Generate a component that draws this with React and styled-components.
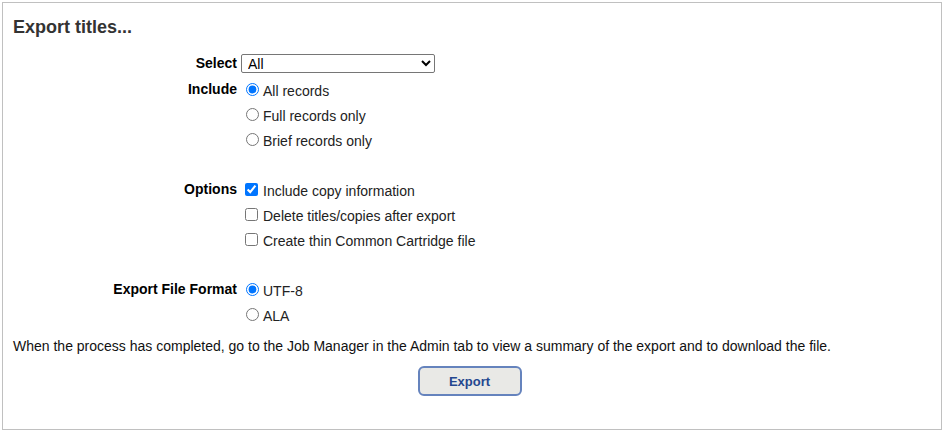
import { useState } from "react";
import styled, { createGlobalStyle } from "styled-components";

const GlobalStyle = createGlobalStyle`
  html, body {
    margin: 0;
    padding: 0;
    background: #fff;
  }
  body {
    font-family: "Liberation Sans", Arial, sans-serif;
    color: #222;
  }
`;

function App() {
  const [scope, setScope] = useState("All");
  const [include, setInclude] = useState("all");
  const [copyInfo, setCopyInfo] = useState(true);
  const [deleteAfter, setDeleteAfter] = useState(false);
  const [thinCartridge, setThinCartridge] = useState(false);
  const [format, setFormat] = useState("utf8");

  return (
    <>
      <GlobalStyle />
      <Panel>
        <Title>Export titles...</Title>
        <Form>
          <Label $single>Select</Label>
          <Field>
            <Dropdown value={scope} onChange={(e) => setScope(e.target.value)}>
              <option>All</option>
              <option>Selected</option>
            </Dropdown>
          </Field>

          <Label>Include</Label>
          <Field>
            <Choice>
              <Radio
                type="radio"
                checked={include === "all"}
                onChange={() => setInclude("all")}
              />
              All records
            </Choice>
            <Choice>
              <Radio
                type="radio"
                checked={include === "full"}
                onChange={() => setInclude("full")}
              />
              Full records only
            </Choice>
            <Choice>
              <Radio
                type="radio"
                checked={include === "brief"}
                onChange={() => setInclude("brief")}
              />
              Brief records only
            </Choice>
          </Field>

          <Spacer />

          <Label>Options</Label>
          <Field>
            <Choice>
              <Check
                type="checkbox"
                checked={copyInfo}
                onChange={() => setCopyInfo(!copyInfo)}
              />
              Include copy information
            </Choice>
            <Choice>
              <Check
                type="checkbox"
                checked={deleteAfter}
                onChange={() => setDeleteAfter(!deleteAfter)}
              />
              Delete titles/copies after export
            </Choice>
            <Choice>
              <Check
                type="checkbox"
                checked={thinCartridge}
                onChange={() => setThinCartridge(!thinCartridge)}
              />
              Create thin Common Cartridge file
            </Choice>
          </Field>

          <Spacer />

          <Label>Export File Format</Label>
          <Field>
            <Choice>
              <Radio
                type="radio"
                checked={format === "utf8"}
                onChange={() => setFormat("utf8")}
              />
              UTF-8
            </Choice>
            <Choice>
              <Radio
                type="radio"
                checked={format === "ala"}
                onChange={() => setFormat("ala")}
              />
              ALA
            </Choice>
          </Field>
        </Form>
        <Note>
          When the process has completed, go to the Job Manager in the Admin
          tab to view a summary of the export and to download the file.
        </Note>
        <Actions>
          <ExportButton type="button">Export</ExportButton>
        </Actions>
      </Panel>
    </>
  );
}

export default App;

const Panel = styled.div`
  margin: 2px 3px 0 2px;
  border: 1px solid #c0c0c0;
  padding: 14px 10px 33px 10px;
`;

const Title = styled.h2`
  margin: 0;
  font-size: 18px;
  line-height: 20px;
  font-weight: bold;
  color: #333;
`;

const Form = styled.div`
  display: grid;
  grid-template-columns: 224px auto;
  column-gap: 4px;
  margin-top: 17px;
`;

const Label = styled.div`
  text-align: right;
  font-size: 14px;
  font-weight: bold;
  color: #000;
  line-height: ${(p) => (p.$single ? "19px" : "22px")};
  padding-top: ${(p) => (p.$single ? "0" : "1px")};
`;

const Field = styled.div`
  display: flex;
  flex-direction: column;
  align-items: flex-start;
`;

const Dropdown = styled.select`
  width: 194px;
  height: 19px;
  font-family: "Liberation Sans", Arial, sans-serif;
  font-size: 14px;
  color: #000;
  padding: 0 0 0 2px;
  border: 1px solid #767676;
  border-radius: 2px;
  background: #fff;
  margin-bottom: 4px;
`;

const Choice = styled.label`
  display: flex;
  align-items: center;
  height: 25px;
  font-size: 14px;
  color: #222;
  padding-top: 2px;
  box-sizing: border-box;
`;

const Radio = styled.input`
  width: 13px;
  height: 13px;
  margin: 0 4px 2px 5px;
  accent-color: #0075ff;
`;

const Check = styled.input`
  width: 13px;
  height: 13px;
  margin: 0 5px 2px 4px;
  accent-color: #0075ff;
`;

const Spacer = styled.div`
  grid-column: 1 / -1;
  height: 25px;
`;

const Note = styled.p`
  margin: 10px 0 0 0;
  font-size: 14px;
  line-height: 18px;
  color: #111;
`;

const Actions = styled.div`
  display: flex;
  justify-content: center;
  padding-right: 5px;
  margin-top: 11px;
`;

const ExportButton = styled.button`
  box-sizing: border-box;
  width: 104px;
  height: 30px;
  background: #e9e9e6;
  border: 2px solid #6583bd;
  border-radius: 6px;
  color: #24478f;
  font-family: "Liberation Sans", Arial, sans-serif;
  font-size: 13px;
  font-weight: bold;
  cursor: pointer;
`;
